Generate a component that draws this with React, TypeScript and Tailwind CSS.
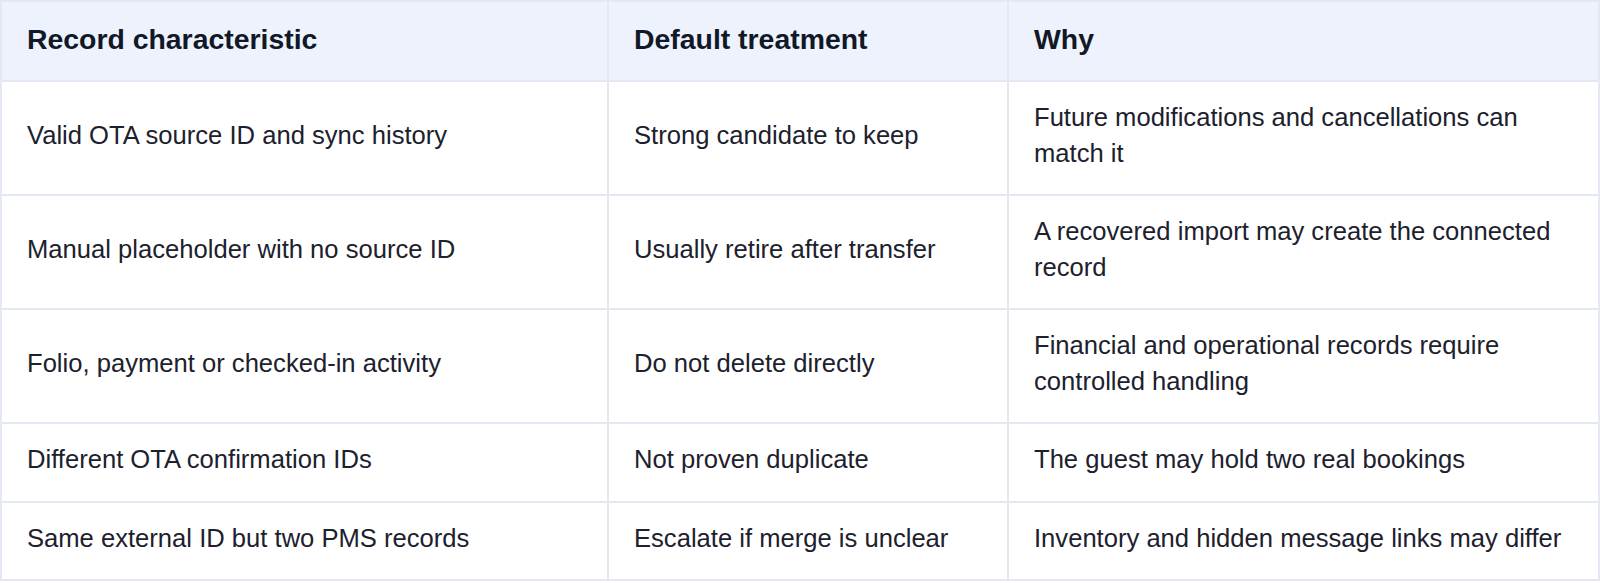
const rows = [
  {
    trait: "Valid OTA source ID and sync history",
    treatment: "Strong candidate to keep",
    why: "Future modifications and cancellations can match it",
  },
  {
    trait: "Manual placeholder with no source ID",
    treatment: "Usually retire after transfer",
    why: "A recovered import may create the connected record",
  },
  {
    trait: "Folio, payment or checked-in activity",
    treatment: "Do not delete directly",
    why: "Financial and operational records require controlled handling",
  },
  {
    trait: "Different OTA confirmation IDs",
    treatment: "Not proven duplicate",
    why: "The guest may hold two real bookings",
  },
  {
    trait: "Same external ID but two PMS records",
    treatment: "Escalate if merge is unclear",
    why: "Inventory and hidden message links may differ",
  },
];

const th =
  "border-r-2 border-b-2 border-[#e3e8f2] bg-[#eef2fd] px-[25px] pt-[17px] pb-[21px] text-left text-[28.4px] leading-[40px] font-bold text-[#111827]";
const td =
  "border-r-2 border-b-2 border-[#e3e8f2] px-[25px] pt-[18px] pb-[23px] align-middle text-[25.6px] leading-[35.5px] text-[#1c212d]";

export default function App() {
  return (
    <div className="min-h-screen bg-white font-['Liberation_Sans',Arial,sans-serif]">
      <table className="w-full table-fixed border-separate border-spacing-0 border-l-2 border-t-2 border-[#e3e8f2]">
        <colgroup>
          <col className="w-[607px]" />
          <col className="w-[400px]" />
          <col />
        </colgroup>
        <thead>
          <tr>
            <th className={th}>Record characteristic</th>
            <th className={th}>Default treatment</th>
            <th className={th}>Why</th>
          </tr>
        </thead>
        <tbody>
          {rows.map((r) => (
            <tr key={r.trait}>
              <td className={td}>{r.trait}</td>
              <td className={td}>{r.treatment}</td>
              <td className={td}>{r.why}</td>
            </tr>
          ))}
        </tbody>
      </table>
    </div>
  );
}
